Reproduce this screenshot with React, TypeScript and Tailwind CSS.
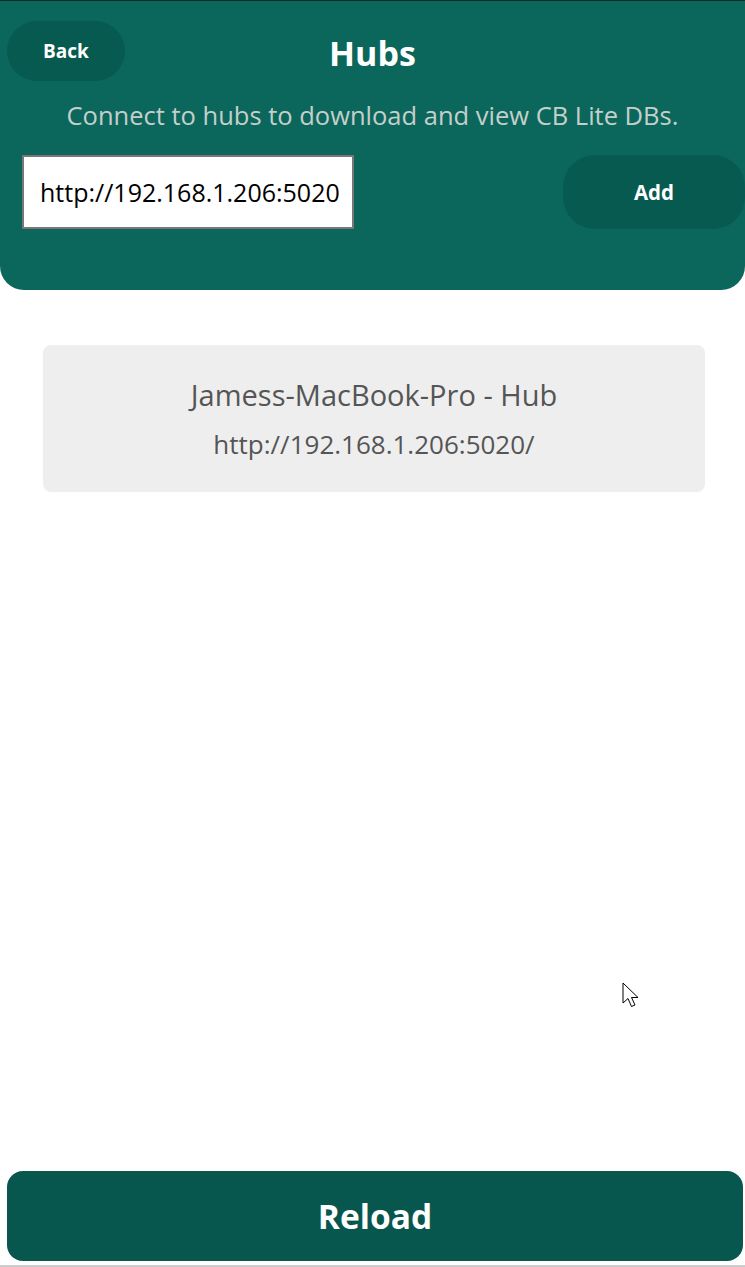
import { useState } from 'react'

export default function App() {
  const [url, setUrl] = useState('http://192.168.1.206:5020')

  return (
    <div className="relative flex h-[1267px] w-[745px] flex-col bg-white font-['Open_Sans',sans-serif]">
      {/* Header */}
      <div className="flex h-[290px] flex-col rounded-b-[24px] border-t border-[#0a2f2a] bg-[#0b675c]">
        <div className="relative flex h-[104px] items-start justify-center">
          <button className="absolute left-[7px] top-[20px] h-[60px] w-[118px] rounded-full bg-[#075a50] text-[19px] font-bold text-white">
            Back
          </button>
          <h1 className="mt-[30px] text-[34px] font-bold leading-[44px] text-white">Hubs</h1>
        </div>
        <p className="-mt-[8px] text-center text-[25.5px] leading-[36px] text-[#c5cfcb]">
          Connect to hubs to download and view CB Lite DBs.
        </p>
        <div className="mt-[22px] flex items-center justify-between pl-[22px]">
          <input
            value={url}
            onChange={e => setUrl(e.target.value)}
            className="h-[74px] w-[332px] border-2 border-[#777] bg-white pl-[16px] pr-[2px] text-[25px] text-black outline-none"
          />
          <button className="h-[74px] w-[182px] rounded-[32px] bg-[#075a50] text-[20.5px] font-bold text-white">
            Add
          </button>
        </div>
      </div>

      {/* Hub list */}
      <div className="flex-1 pl-[43px] pr-[40px] pt-[55px]">
        <div className="flex h-[147px] flex-col items-center justify-center gap-[12px] rounded-[8px] bg-[#eeeeee] text-[#555]">
          <div className="text-[29px] leading-[38px]">Jamess-MacBook-Pro - Hub</div>
          <div className="text-[26px] leading-[36px]">http://192.168.1.206:5020/</div>
        </div>
      </div>

      {/* Reload */}
      <div className="border-b-2 border-[#cccccc] pb-[4px] pl-[7px] pr-[2px]">
        <button className="h-[90px] w-full rounded-[16px] bg-[#08574e] text-[33.5px] font-bold text-white">
          Reload
        </button>
      </div>

      {/* cursor */}
      <svg className="absolute left-[622px] top-[982px]" width="20" height="30" viewBox="0 0 20 30">
        <path d="M1 1 L1 21 L6 16.5 L9.5 24.5 L13 23 L9.5 15.5 L16 15.5 Z" fill="white" stroke="black" strokeWidth="1" strokeLinejoin="round" />
      </svg>
    </div>
  )
}
